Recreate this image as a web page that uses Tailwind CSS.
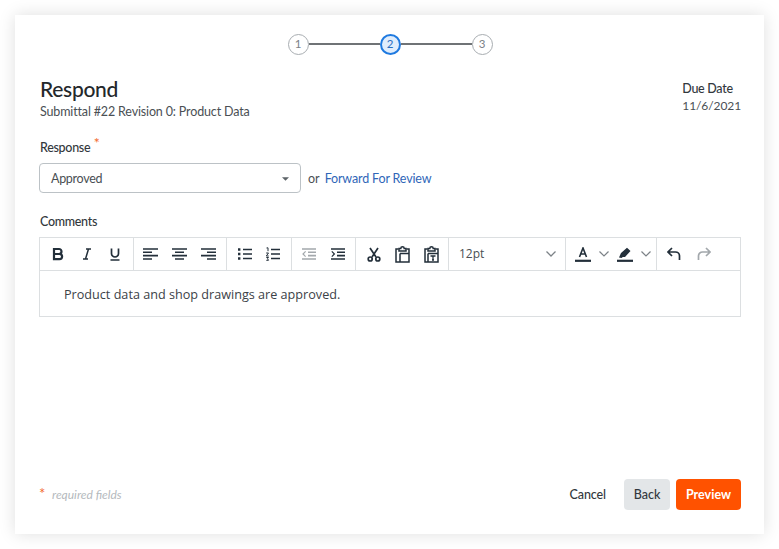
<!DOCTYPE html>
<html lang="en">
<head>
    <meta charset="UTF-8">
    <meta name="viewport" content="width=device-width, initial-scale=1.0">
    <title>Respond</title>
    <script src="https://cdn.jsdelivr.net/npm/@tailwindcss/browser@4"></script>
</head>
<body class="bg-white font-['Lato','Liberation_Sans',sans-serif] text-[#32383d] overflow-hidden">
    <div class="w-[779px] h-[549px] p-[15px]">
        <div class="relative w-[749px] h-[519px] bg-white shadow-[0_0_16px_rgba(0,0,0,0.13)] pl-[25px] pr-[23px] flex flex-col">

            <!-- stepper -->
            <div class="flex justify-center items-center pt-[19px] pr-[1px] h-[39px]">
                <div class="w-[21px] h-[21px] rounded-full border border-[#a8adb1] flex items-center justify-center text-[11.500px] text-[#7c8287]">1</div>
                <div class="w-[71px] h-[2px] bg-[#6f7376]"></div>
                <div class="w-[21px] h-[21px] rounded-full border-2 border-[#1f7ae0] bg-[#e0edfc] flex items-center justify-center text-[11.500px] text-[#2a6fc0]">2</div>
                <div class="w-[71px] h-[2px] bg-[#6f7376]"></div>
                <div class="w-[21px] h-[21px] rounded-full border border-[#a8adb1] flex items-center justify-center text-[11.500px] text-[#7c8287]">3</div>
            </div>

            <!-- heading -->
            <div class="flex justify-between mt-[23px]">
                <div>
                    <h1 class="text-[21px] tracking-[-0.3px] leading-[24px] font-medium text-[#24282b]">Respond</h1>
                    <p class="pt-[2px] text-[12.500px] tracking-[-0.15px] leading-[18px] text-[#4a4f54]">Submittal #22 Revision 0: Product Data</p>
                </div>
                <div class="text-[12.500px] leading-[17px] mt-[3px]">
                    <div class="font-medium tracking-[-0.3px] text-[#32383d]">Due Date</div>
                    <div class="text-[12px] tracking-[-0.1px] text-[#4a4f54]">11/6/2021</div>
                </div>
            </div>

            <!-- response -->
            <div class="mt-[18px] text-[12.500px] tracking-[-0.3px] leading-[18px] font-medium relative w-fit">
                Response<span class="absolute -right-[9px] -top-[5px] text-[#f26a2e] text-[14px]">*</span>
            </div>
            <div class="flex items-center mt-[6px] -ml-[1px]">
                <div class="w-[262px] h-[30px] border border-[#bcc2c6] rounded-[4px] flex items-center justify-between pt-[2px] pl-[11px] pr-[11px] text-[12.500px] tracking-[-0.3px] text-[#4a4f54]">
                    Approved
                    <svg class="-mt-[1px]" width="7" height="4" viewBox="0 0 8 4"><path d="M0 0h8L4 4z" fill="#5d6368"/></svg>
                </div>
                <span class="ml-[7px] pt-[2px] text-[12.500px] text-[#4a4f54]">or</span>
                <a class="ml-[5px] pt-[2px] text-[12.500px] tracking-[-0.15px] text-[#2f66b8]">Forward For Review</a>
            </div>

            <!-- comments -->
            <div class="mt-[20px] text-[12.500px] tracking-[-0.3px] leading-[18px] font-medium">Comments</div>
            <div class="mt-[6px] border border-[#dcdfe1] w-[702px] -ml-[1px]">
                <div class="flex h-[33px] border-b border-[#dcdfe1] text-[#232f3a]">
                    <div class="w-[94px] flex items-center pl-[3px] border-r border-[#dcdfe1]">
                        <div class="w-[29px] flex justify-center"><svg width="14" height="14" viewBox="0 0 14 14" fill="none" stroke="#232f3a" stroke-width="2.200"><path d="M3 2h5a2.500 2.500 0 0 1 0 5H3zM3 7h5.500a2.600 2.600 0 0 1 0 5.200H3zM3 1v12"/></svg></div>
                        <div class="w-[29px] flex justify-center"><svg width="14" height="14" viewBox="0 0 14 14" fill="none" stroke="#232f3a" stroke-width="1.500"><path d="M6 2h5M3 12h5M8.500 2 5.500 12"/></svg></div>
                        <div class="w-[28px] flex justify-center"><svg width="14" height="14" viewBox="0 0 14 14" fill="none" stroke="#232f3a" stroke-width="1.700"><path d="M3.500 1.500v5a3.500 3.500 0 0 0 7 0v-5M2.500 13h9"/></svg></div>
                    </div>
                    <div class="w-[93px] flex items-center pl-[2px] border-r border-[#dcdfe1]">
                        <div class="w-[29px] flex justify-center"><svg width="15" height="12" viewBox="0 0 15 12" stroke="#232f3a" stroke-width="1.600"><path d="M0 1h15M0 4.300h9M0 7.600h15M0 11h9"/></svg></div>
                        <div class="w-[29px] flex justify-center"><svg width="15" height="12" viewBox="0 0 15 12" stroke="#232f3a" stroke-width="1.600"><path d="M0 1h15M3 4.300h9M0 7.600h15M3 11h9"/></svg></div>
                        <div class="w-[29px] flex justify-center"><svg width="15" height="12" viewBox="0 0 15 12" stroke="#232f3a" stroke-width="1.600"><path d="M0 1h15M6 4.300h9M0 7.600h15M6 11h9"/></svg></div>
                    </div>
                    <div class="w-[65px] flex items-center pl-[4px] border-r border-[#dcdfe1]">
                        <div class="w-[28px] flex justify-center"><svg width="14" height="12" viewBox="0 0 14 12" fill="none" stroke="#232f3a" stroke-width="1.600"><path d="M5 1.500h9M5 6h9M5 10.500h9"/><path d="M0 1.500h2.400M0 6h2.400M0 10.500h2.400" stroke-width="2.400"/></svg></div>
                        <div class="w-[28px] flex justify-center"><svg width="14" height="14" viewBox="0 0 14 14" fill="none" stroke="#232f3a" stroke-width="1.600"><path d="M5 2.500h9M5 7h9M5 11.500h9"/><path d="M.5 1 2 .8v3.400M.2 6h2.300L.3 9h2.400M.3 10.500h2.200l-1 1.200 1 1.600H.3" stroke-width="1"/></svg></div>
                    </div>
                    <div class="w-[64px] flex items-center pl-[2px] border-r border-[#dcdfe1]">
                        <div class="w-[29px] flex justify-center"><svg width="14" height="12" viewBox="0 0 14 12" fill="none" stroke="#a3a8ac" stroke-width="1.600"><path d="M0 1h14M6 4.300h8M6 7.600h8M0 11h14"/><path d="M3.600 3.400 1 6l2.600 2.600" stroke-width="1.200"/></svg></div>
                        <div class="w-[29px] flex justify-center"><svg width="14" height="12" viewBox="0 0 14 12" fill="none" stroke="#232f3a" stroke-width="1.600"><path d="M0 1h14M6 4.300h8M6 7.600h8M0 11h14"/><path d="M.8 3.400 3.400 6 .8 8.600" stroke-width="1.200"/></svg></div>
                    </div>
                    <div class="w-[93px] flex items-center pl-[3px] border-r border-[#dcdfe1]">
                        <div class="w-[29px] flex justify-center"><svg width="14" height="15" viewBox="0 0 14 15" fill="none" stroke="#232f3a" stroke-width="1.700"><path d="M3 1 9 10M11 1 5 10"/><circle cx="3.200" cy="12" r="2"/><circle cx="10.800" cy="12" r="2"/></svg></div>
                        <div class="w-[29px] flex justify-center"><svg width="15" height="17" viewBox="0 0 15 17" fill="none" stroke="#232f3a" stroke-width="1.500"><path d="M3.500 3H1v13h13V3h-2.500"/><path d="M4 5V2.500h1.800a1.700 1.700 0 0 1 3.400 0H11V5zM5 7.500h9M5 7.500V16"/></svg></div>
                        <div class="w-[29px] flex justify-center"><svg width="15" height="17" viewBox="0 0 15 17" fill="none" stroke="#232f3a" stroke-width="1.500"><path d="M3.500 3H1v13h13V3h-2.500"/><path d="M4 5V2.500h1.800a1.700 1.700 0 0 1 3.400 0H11V5zM4 7.500h10M4 7.500V16"/><path d="M6.500 10h5M9 10v4M8 14h2" stroke-width="1.300"/></svg></div>
                    </div>
                    <div class="w-[117px] flex items-center justify-between pl-[10px] pr-[9px] border-r border-[#dcdfe1] text-[12px] text-[#4a4f54] font-['Open_Sans',sans-serif]">
                        12pt
                        <svg width="10" height="6" viewBox="0 0 10 6" fill="none" stroke="#7c8287" stroke-width="1.300"><path d="m.5.500 4.500 4.500 4.500-4.500"/></svg>
                    </div>
                    <div class="w-[91px] flex items-center pl-[9px] border-r border-[#dcdfe1]">
                        <svg width="16" height="15" viewBox="0 0 16 15" fill="none" stroke="#232f3a"><path d="m4.500 10 3.500-9 3.500 9M6 7h4" stroke-width="1.600"/><path d="M0 13.800h16" stroke-width="2.200"/></svg>
                        <svg class="ml-[8px]" width="10" height="6" viewBox="0 0 10 6" fill="none" stroke="#7c8287" stroke-width="1.200"><path d="m.5.500 4.500 4.500 4.500-4.500"/></svg>
                        <svg class="ml-[8px]" width="16" height="15" viewBox="0 0 16 15"><path d="M4 6 10 .8l3.500 3.200-5.500 6H5.800L4.500 11 2 10.500z" fill="#232f3a"/><path d="M0 13.800h16" stroke="#232f3a" stroke-width="2.200"/></svg>
                        <svg class="ml-[8px]" width="10" height="6" viewBox="0 0 10 6" fill="none" stroke="#7c8287" stroke-width="1.200"><path d="m.5.500 4.500 4.500 4.500-4.500"/></svg>
                    </div>
                    <div class="flex-1 flex items-center pl-[10px]">
                        <svg width="14" height="14" viewBox="0 0 14 14" fill="none" stroke="#232f3a" stroke-width="1.700"><path d="M5 1 1 5l4 4M1 5h7.500a4 4 0 0 1 4 4v4"/></svg>
                        <svg class="ml-[16px]" width="14" height="14" viewBox="0 0 14 14" fill="none" stroke="#a3a8ac" stroke-width="1.700"><path d="m9 1 4 4-4 4M13 5H5.500a4 4 0 0 0-4 4v4"/></svg>
                    </div>
                </div>
                <div class="h-[45px] pl-[24px] pt-[3px] flex items-center text-[12.630px] text-[#3c4247] font-['Open_Sans',sans-serif]">Product data and shop drawings are approved.</div>
            </div>

            <!-- footer -->
            <div class="mt-auto mb-[24px] flex items-center justify-between">
                <div class="text-[12px] italic text-[#b4b9bd] flex items-center"><span class="not-italic text-[#f26a2e] text-[15px] mr-[8px] w-[5px] -ml-[1px] -mt-[3px]">*</span>required fields</div>
                <div class="flex items-center text-[12.500px] font-bold">
                    <span class="font-medium tracking-[-0.1px] text-[#32383d] mt-[2px] mr-[18px]">Cancel</span>
                    <div class="w-[46px] h-[31px] pt-[2px] rounded-[4px] bg-[#e3e6e8] flex items-center justify-center font-medium mr-[6px]">Back</div>
                    <div class="w-[65px] h-[31px] pt-[2px] rounded-[4px] bg-[#ff5200] text-white flex items-center justify-center">Preview</div>
                </div>
            </div>
        </div>
    </div>
</body>
</html>
